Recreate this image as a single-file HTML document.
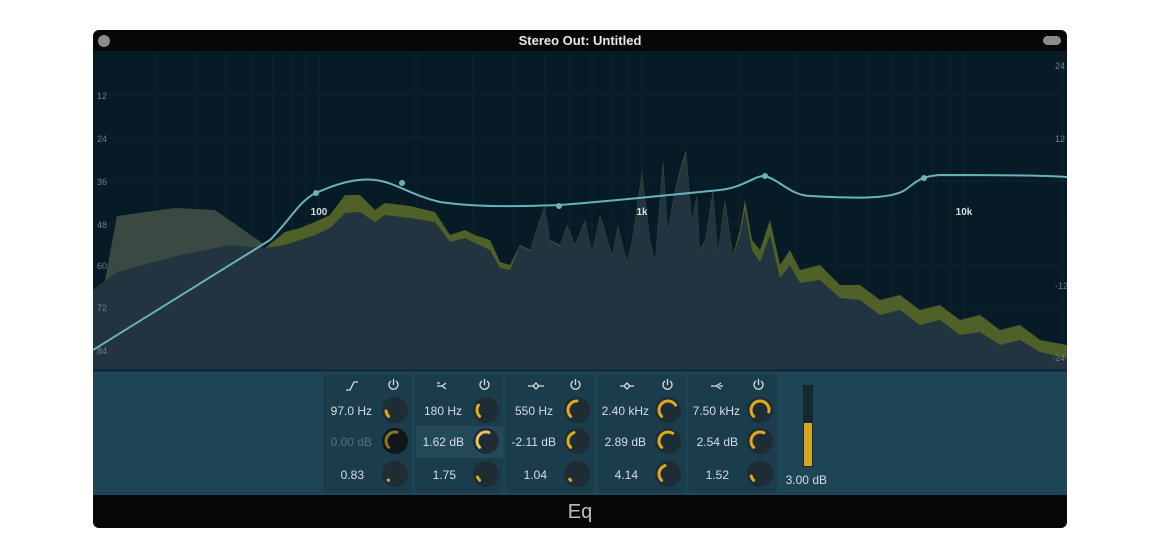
<!DOCTYPE html>
<html><head><meta charset="utf-8"><style>
body{margin:0;width:1160px;height:560px;background:#fff;position:relative;overflow:hidden;font-family:"Liberation Sans",sans-serif}
.win{position:absolute;left:93px;top:30px;width:974px;height:498px;border-radius:6px;overflow:hidden;background:#070707}
.title{position:absolute;left:0;top:0;width:974px;height:21px;color:#e8e8e8;font-size:13px;font-weight:bold;text-align:center;line-height:21px}
.panel{position:absolute;left:0;top:340px;width:974px;height:125px;background:#1d4555}
.eq{position:absolute;left:0;top:465px;width:974px;height:33px;color:#bfbfbf;font-size:20px;text-align:center;line-height:35px}
.band{position:absolute;top:4px;height:119px;background:#1a3c4b;border-radius:4px}
</style></head><body>
<div class="win">
<div class="title">Stereo Out: Untitled</div>
<div style="position:absolute;left:5px;top:5px;width:12px;height:12px;border-radius:6px;background:#8a8a8a"></div>
<div style="position:absolute;left:950px;top:6px;width:18px;height:9px;border-radius:5px;background:#8a8a8a"></div>
<div class="panel">
<div class="band" style="left:230px;width:89px"></div>
<div class="band" style="left:322px;width:88px"></div>
<div class="band" style="left:412px;width:89px"></div>
<div class="band" style="left:504px;width:89px"></div>
<div class="band" style="left:595px;width:89px"></div>
<div style="position:absolute;left:323px;top:56px;width:87px;height:32px;background:#244a58"></div>
</div>
<div class="eq">Eq</div>
</div>
<svg width="1160" height="560" style="position:absolute;left:0;top:0">
<defs><clipPath id="g"><rect x="93" y="51" width="974" height="319"/></clipPath></defs>
<g clip-path="url(#g)">
<rect x="93" y="51" width="974" height="319" fill="#061b26"/>
<g stroke="#0c2632" stroke-width="1">
<line x1="93" y1="95" x2="1067" y2="95"/><line x1="93" y1="138" x2="1067" y2="138"/><line x1="93" y1="181" x2="1067" y2="181"/><line x1="93" y1="224" x2="1067" y2="224"/><line x1="93" y1="265" x2="1067" y2="265"/><line x1="93" y1="307" x2="1067" y2="307"/><line x1="93" y1="350" x2="1067" y2="350"/>
<line x1="155" y1="51" x2="155" y2="370"/><line x1="195" y1="51" x2="195" y2="370"/><line x1="226" y1="51" x2="226" y2="370"/><line x1="252" y1="51" x2="252" y2="370"/><line x1="273" y1="51" x2="273" y2="370"/><line x1="292" y1="51" x2="292" y2="370"/><line x1="306" y1="51" x2="306" y2="370"/><line x1="319" y1="51" x2="319" y2="370"/>
<line x1="416" y1="51" x2="416" y2="370"/><line x1="473" y1="51" x2="473" y2="370"/><line x1="514" y1="51" x2="514" y2="370"/><line x1="545" y1="51" x2="545" y2="370"/><line x1="570" y1="51" x2="570" y2="370"/><line x1="592" y1="51" x2="592" y2="370"/><line x1="611" y1="51" x2="611" y2="370"/><line x1="627" y1="51" x2="627" y2="370"/><line x1="642" y1="51" x2="642" y2="370"/>
<line x1="739" y1="51" x2="739" y2="370"/><line x1="796" y1="51" x2="796" y2="370"/><line x1="837" y1="51" x2="837" y2="370"/><line x1="868" y1="51" x2="868" y2="370"/><line x1="893" y1="51" x2="893" y2="370"/><line x1="915" y1="51" x2="915" y2="370"/><line x1="933" y1="51" x2="933" y2="370"/><line x1="950" y1="51" x2="950" y2="370"/><line x1="964" y1="51" x2="964" y2="370"/><line x1="1062" y1="51" x2="1062" y2="370"/>
</g>
<polygon fill="#3a4a42" points="93,345 117,216 175,208 215,210 265,245 117,272 93,330"/>
<polygon fill="#4f6128" points="93,290 117,272 180,255 230,245 265,248 285,232 300,228 315,222 330,215 345,195 360,195 375,210 385,203 410,206 435,212 450,235 465,230 475,235 490,240 500,262 510,265 520,245 530,250 538,225 545,205 550,240 560,245 567,225 575,245 585,220 592,252 600,215 605,230 612,255 618,225 627,262 632,240 642,172 650,240 655,260 663,160 668,230 675,190 680,170 686,150 692,220 697,195 700,250 705,240 713,190 718,250 725,200 733,255 740,230 745,200 752,240 760,250 770,220 780,265 790,250 800,270 820,265 840,285 860,285 880,300 900,295 920,310 940,305 960,320 980,315 1000,330 1020,325 1040,340 1067,345 1067,370 93,370"/>
<polygon fill="#22343f" points="93,290 117,272 180,255 230,245 265,248 285,245 300,240 315,235 330,228 345,213 360,212 375,222 385,215 410,218 435,222 450,242 465,238 475,243 490,250 500,268 510,270 520,246 530,251 538,226 545,206 550,241 560,246 567,226 575,246 585,221 592,253 600,216 605,231 612,256 618,226 627,263 632,241 642,175 650,241 655,261 663,165 668,231 675,192 680,172 686,153 692,221 697,197 700,251 705,241 713,193 718,251 725,203 733,256 740,235 745,210 752,250 760,262 770,235 780,278 790,265 800,283 820,280 840,298 860,300 880,315 900,310 920,325 940,320 960,335 980,332 1000,345 1020,340 1040,352 1067,358 1067,370 93,370"/>
<path d="M93,350 L270,240 C290,220 300,200 316,193 C340,182 360,178 375,180 C395,182 410,195 440,202 C480,208 530,206 560,205 C600,202 640,198 720,190 C745,187 755,175 765,176 C780,180 790,195 810,196 C850,198 890,200 905,190 C915,183 920,176 940,175 C980,175 1040,175 1067,177" fill="none" stroke="#6ab2ba" stroke-width="2"/>
<g fill="#6ab2ba"><circle cx="316" cy="193" r="3"/><circle cx="402" cy="183" r="3"/><circle cx="559" cy="206" r="3"/><circle cx="765" cy="176" r="3"/><circle cx="924" cy="178" r="3"/></g>
<g fill="#d8dde0" font-size="10" font-weight="bold" text-anchor="middle"><text x="319" y="215">100</text><text x="642" y="215">1k</text><text x="964" y="215">10k</text></g>
<g fill="#6d7f88" font-size="9"><text x="97" y="99">12</text><text x="97" y="142">24</text><text x="97" y="185">36</text><text x="97" y="228">48</text><text x="97" y="269">60</text><text x="97" y="311">72</text><text x="97" y="354">84</text>
<text x="1055" y="69">24</text><text x="1055" y="142">12</text><text x="1055" y="289">-12</text><text x="1052" y="361">-24</text></g>
</g>
<line x1="93" y1="370.5" x2="1067" y2="370.5" stroke="#0a2733" stroke-width="2"/>
<g stroke="#d6dde2" stroke-width="1.3" fill="none">
<path d="M346,390 L350,390 L354,382 L358,382"/>
<path d="M437,386 L442,386 L446,383 M442,386 L446,389 M437,383 L440,383"/>
<path d="M528,386 L533,386 L536,383 L539,386 L536,389 L533,386 M539,386 L544,386"/>
<path d="M620,386 L624,386 L627,383 L630,386 L627,389 L624,386 M630,386 L634,386"/>
<path d="M711,386 L716,386 L721,383 M716,386 L721,389 M719,386 L723,386"/>
<g><path d="M391,381 A4.5,4.5 0 1 0 396,381"/><line x1="393.5" y1="379" x2="393.5" y2="385"/></g>
<g><path d="M482,381 A4.5,4.5 0 1 0 487,381"/><line x1="484.5" y1="379" x2="484.5" y2="385"/></g>
<g><path d="M573,381 A4.5,4.5 0 1 0 578,381"/><line x1="575.5" y1="379" x2="575.5" y2="385"/></g>
<g><path d="M665,381 A4.5,4.5 0 1 0 670,381"/><line x1="667.5" y1="379" x2="667.5" y2="385"/></g>
<g><path d="M756,381 A4.5,4.5 0 1 0 761,381"/><line x1="758.5" y1="379" x2="758.5" y2="385"/></g>
</g>
<g fill="#d6dde2" font-size="12" text-anchor="end">
<text x="372" y="415">97.0 Hz</text><text x="372" y="446" fill="#5d6e76">0.00 dB</text><text x="364" y="479">0.83</text>
<text x="462" y="415">180 Hz</text><text x="464" y="446">1.62 dB</text><text x="456" y="479">1.75</text>
<text x="553" y="415">550 Hz</text><text x="556" y="446">-2.11 dB</text><text x="547" y="479">1.04</text>
<text x="649" y="415">2.40 kHz</text><text x="646" y="446">2.89 dB</text><text x="638" y="479">4.14</text>
<text x="740" y="415">7.50 kHz</text><text x="738" y="446">2.54 dB</text><text x="729" y="479">1.52</text>
<text x="827" y="484">3.00 dB</text>
</g>
<rect x="803" y="385" width="10" height="82" fill="#16262e"/><rect x="804" y="423" width="8" height="43" fill="#d4a820"/>
<g stroke-width="3" fill="none" stroke-linecap="round">
<circle cx="395" cy="410" r="13" fill="#1e2c35" stroke="none"/><circle cx="395" cy="410" r="9" stroke="#e0aa1c" stroke-dasharray="6.1 100" transform="rotate(135 395 410)"/>
<circle cx="395" cy="441" r="13" fill="#0f171b" stroke="none"/><circle cx="395" cy="441" r="9" stroke="#8b7420" stroke-dasharray="23 100" transform="rotate(135 395 441)"/>
<circle cx="395" cy="474" r="13" fill="#1e2c35" stroke="none"/><circle cx="395" cy="474" r="9" stroke="#e0aa1c" stroke-dasharray="0.5 100" transform="rotate(135 395 474)"/>
<circle cx="486" cy="410" r="13" fill="#1e2c35" stroke="none"/><circle cx="486" cy="410" r="9" stroke="#e0aa1c" stroke-dasharray="12 100" transform="rotate(135 486 410)"/>
<circle cx="486" cy="441" r="13" fill="#1e2c35" stroke="none"/><circle cx="486" cy="441" r="9" stroke="#eac45a" stroke-dasharray="24 100" transform="rotate(135 486 441)"/>
<circle cx="486" cy="474" r="13" fill="#1e2c35" stroke="none"/><circle cx="486" cy="474" r="9" stroke="#e0aa1c" stroke-dasharray="4 100" transform="rotate(135 486 474)"/>
<circle cx="577" cy="410" r="13" fill="#1e2c35" stroke="none"/><circle cx="577" cy="410" r="9" stroke="#e0aa1c" stroke-dasharray="21 100" transform="rotate(135 577 410)"/>
<circle cx="577" cy="441" r="13" fill="#1e2c35" stroke="none"/><circle cx="577" cy="441" r="9" stroke="#e0aa1c" stroke-dasharray="18 100" transform="rotate(135 577 441)"/>
<circle cx="577" cy="474" r="13" fill="#1e2c35" stroke="none"/><circle cx="577" cy="474" r="9" stroke="#e0aa1c" stroke-dasharray="1.5 100" transform="rotate(135 577 474)"/>
<circle cx="668" cy="410" r="13" fill="#1e2c35" stroke="none"/><circle cx="668" cy="410" r="9" stroke="#e0aa1c" stroke-dasharray="30 100" transform="rotate(135 668 410)"/>
<circle cx="668" cy="441" r="13" fill="#1e2c35" stroke="none"/><circle cx="668" cy="441" r="9" stroke="#e0aa1c" stroke-dasharray="26 100" transform="rotate(135 668 441)"/>
<circle cx="668" cy="474" r="13" fill="#1e2c35" stroke="none"/><circle cx="668" cy="474" r="9" stroke="#e0aa1c" stroke-dasharray="18 100" transform="rotate(135 668 474)"/>
<circle cx="760" cy="410" r="13" fill="#1e2c35" stroke="none"/><circle cx="760" cy="410" r="9" stroke="#e0aa1c" stroke-dasharray="37 100" transform="rotate(135 760 410)"/>
<circle cx="760" cy="441" r="13" fill="#1e2c35" stroke="none"/><circle cx="760" cy="441" r="9" stroke="#e0aa1c" stroke-dasharray="25 100" transform="rotate(135 760 441)"/>
<circle cx="760" cy="474" r="13" fill="#1e2c35" stroke="none"/><circle cx="760" cy="474" r="9" stroke="#e0aa1c" stroke-dasharray="5 100" transform="rotate(135 760 474)"/>
</g>
</svg>
</body></html>
